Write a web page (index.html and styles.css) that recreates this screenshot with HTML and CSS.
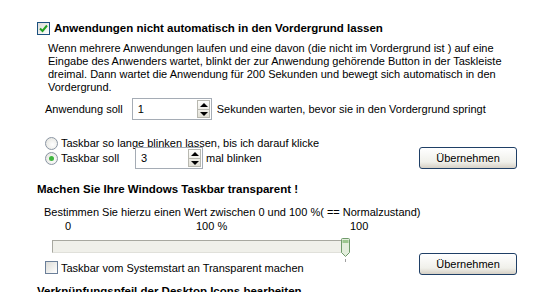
FILE: index.html
```html
<!DOCTYPE html>
<html lang="de">
<head>
    <meta charset="UTF-8">
    <title>Taskbar Einstellungen</title>
    <link rel="stylesheet" href="styles.css">
</head>
<body>
    <div class="panel">
        <div class="group-title">
            <span class="check checked">
                <svg width="9" height="9" viewBox="0 0 9 9"><path d="M1 4.5 L3.5 7 L8 1.5" fill="none" stroke="#21a121" stroke-width="2"/></svg>
            </span>
            <span class="bold">Anwendungen nicht automatisch in den Vordergrund lassen</span>
        </div>
        <p class="info">Wenn mehrere Anwendungen laufen und eine davon (die nicht im Vordergrund ist ) auf eine Eingabe des Anwenders wartet, blinkt der zur Anwendung gehörende Button in der Taskleiste dreimal. Dann wartet die Anwendung für 200 Sekunden und bewegt sich automatisch in den Vordergrund.</p>

        <div class="row seconds">
            <span>Anwendung soll</span>
            <div class="spin wide">
                <span class="spin-value">1</span>
                <span class="spin-btn"><i class="up"></i><i class="down"></i></span>
            </div>
            <span>Sekunden warten, bevor sie in den Vordergrund springt</span>
        </div>

        <div class="options">
            <div class="option-list">
                <div class="row radio-row">
                    <span class="radio"></span>
                    <span>Taskbar so lange blinken lassen, bis ich darauf klicke</span>
                </div>
                <div class="row radio-row">
                    <span class="radio selected"></span>
                    <span class="label-soll">Taskbar soll</span>
                    <div class="spin narrow">
                        <span class="spin-value">3</span>
                        <span class="spin-btn"><i class="up"></i><i class="down"></i></span>
                    </div>
                    <span>mal blinken</span>
                </div>
            </div>
            <button class="xp-button">Übernehmen</button>
        </div>

        <div class="section-title bold">Machen Sie Ihre Windows Taskbar transparent !</div>
        <div class="hint">Bestimmen Sie hierzu einen Wert zwischen 0 und 100 %( == Normalzustand)</div>
        <div class="scale">
            <span class="mark-0">0</span>
            <span class="mark-mid">100 %</span>
            <span class="mark-max">100</span>
        </div>
        <div class="slider">
            <div class="track"></div>
            <span class="thumb">
                <svg width="9" height="20" viewBox="0 0 9 20"><path d="M0.5 1.5 Q0.5 0.5 1.5 0.5 L7.5 0.5 Q8.5 0.5 8.5 1.5 L8.5 14.5 L4.5 18.5 L0.5 14.5 Z" fill="#e3eedc" stroke="#6f9a6b"/><path d="M1.5 2 L7.5 2 L7.5 5 L1.5 5 Z" fill="#9cc78f"/></svg>
            </span>
            <span class="tick"></span>
        </div>
        <div class="bottom-row">
            <div class="row">
                <span class="check"></span>
                <span>Taskbar vom Systemstart an Transparent machen</span>
            </div>
            <button class="xp-button">Übernehmen</button>
        </div>

        <div class="section-title bold cut">Verknüpfungspfeil der Desktop Icons bearbeiten</div>
    </div>
</body>
</html>
```

FILE: styles.css
```css
body {
    margin: 0;
    background: #fff;
    font-family: Tahoma, 'Liberation Sans', Arial, sans-serif;
    font-size: 11px;
    color: #000;
    overflow: hidden;
}

.panel {
    width: 544px;
    height: 292px;
    padding-top: 21px;
    box-sizing: border-box;
    overflow: hidden;
}

.bold {
    font-weight: bold;
    font-size: 11.5px;
}

.group-title {
    display: flex;
    align-items: center;
    gap: 4px;
    margin-left: 37px;
    height: 14px;
}

.check {
    width: 11px;
    height: 11px;
    border: 1px solid #1c5180;
    background: linear-gradient(135deg, #dcdcd7, #fff);
    display: inline-flex;
    align-items: center;
    justify-content: center;
    flex-shrink: 0;
}

.info {
    margin: 7px 40px 0 48px;
    line-height: 13px;
}

.row {
    display: flex;
    align-items: center;
    gap: 5px;
}

.seconds {
    margin: 4px 0 0 45px;
    height: 22px;
}

.spin {
    height: 20px;
    border: 1px solid #a5acb5;
    background: #fff;
    display: flex;
    align-items: center;
    justify-content: space-between;
    padding: 0 1px 0 5px;
    margin-left: 4px;
}

.spin.wide {
    width: 72px;
}

.spin.narrow {
    width: 60px;
    margin-left: 13px;
}

.spin-btn {
    width: 13px;
    height: 18px;
    display: flex;
    flex-direction: column;
    border: 1px solid #b8b8b0;
    background: linear-gradient(#fdfdfb, #e2e0d6);
    box-sizing: border-box;
}

.spin-btn i {
    flex: 1;
    position: relative;
}

.spin-btn i::after {
    content: '';
    position: absolute;
    left: 2px;
    border-left: 4px solid transparent;
    border-right: 4px solid transparent;
}

.spin-btn .up::after {
    top: 2px;
    border-bottom: 4px solid #000;
}

.spin-btn .down {
    border-top: 1px solid #b8b8b0;
}

.spin-btn .down::after {
    top: 2px;
    border-top: 4px solid #000;
}

.options {
    display: flex;
    align-items: flex-end;
    justify-content: space-between;
    margin: 17px 27px 0 45px;
}

.radio-row {
    height: 22px;
    gap: 3px;
}

.option-list .radio-row:first-child {
    height: 12px;
    margin-bottom: -2px;
}

.radio {
    width: 11px;
    height: 11px;
    border: 1px solid #8a95a3;
    border-radius: 50%;
    background: radial-gradient(circle at 60% 60%, #fff, #e0e0da);
    position: relative;
    flex-shrink: 0;
}

.radio.selected::after {
    content: '';
    position: absolute;
    left: 3px;
    top: 3px;
    width: 5px;
    height: 5px;
    border-radius: 50%;
    background: #3fb53f;
}

.xp-button {
    width: 98px;
    height: 22px;
    border: 1px solid #1f3f66;
    border-radius: 3px;
    background: linear-gradient(#fff, #f0f0ea 70%, #d6d0c5);
    font-family: inherit;
    font-size: 11px;
    color: #000;
    padding: 0;
}

.section-title {
    margin: 14px 0 0 37px;
    height: 14px;
}

.hint {
    margin: 9px 0 0 44px;
    height: 13px;
}

.scale {
    position: relative;
    height: 14px;
    margin-top: 1px;
}

.scale span {
    position: absolute;
    top: 0;
}

.mark-0 { left: 65px; }
.mark-mid { left: 196px; }
.mark-max { left: 350px; }

.slider {
    position: relative;
    height: 22px;
    margin-top: 3px;
}

.track {
    position: absolute;
    left: 52px;
    top: 3px;
    width: 294px;
    height: 11px;
    border: 1px solid #a8a8a0;
    border-bottom-color: #e0e0da;
    border-right-color: #e0e0da;
    background: #f0f0ea;
}

.thumb {
    position: absolute;
    left: 341px;
    top: 1px;
    line-height: 0;
}

.tick {
    position: absolute;
    left: 345px;
    top: 22px;
    width: 1px;
    height: 3px;
    background: #a0a0a0;
}

.bottom-row {
    display: flex;
    align-items: flex-end;
    justify-content: space-between;
    margin: -6px 27px 0 45px;
}

.bottom-row .row {
    gap: 3px;
    height: 13px;
    margin-bottom: 1px;
}

.bottom-row .check {
    border-color: #6b7f99;
}

.cut {
    margin-top: 10px;
}
```
